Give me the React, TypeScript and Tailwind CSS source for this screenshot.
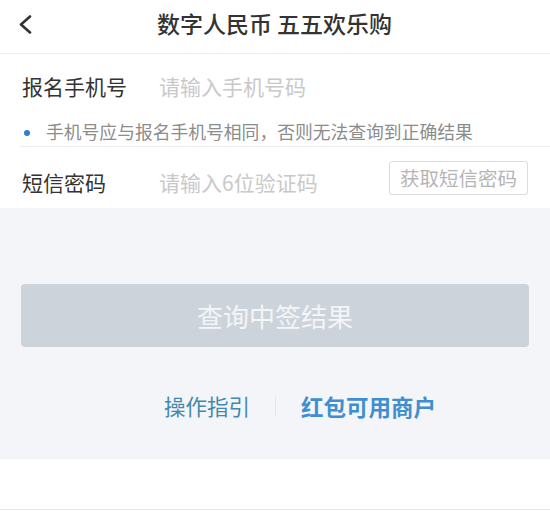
const App = () => {
  return (
    <div className="w-[550px] h-[514px] bg-white font-['Noto_Sans_CJK_SC',sans-serif] text-[#333]">
      {/* header */}
      <div className="relative h-[54px] flex items-center justify-center border-b border-[#efefef]">
        <button className="absolute left-[18px] top-[15px]">
          <svg width="15" height="19" viewBox="0 0 15 19" fill="none">
            <polyline
              points="12,1.5 3,9.5 12,17.5"
              stroke="#333"
              strokeWidth="2.6"
              strokeLinecap="round"
              strokeLinejoin="round"
            />
          </svg>
        </button>
        <h1 className="text-[23px] leading-[28px] font-medium -mt-[8px] ml-[-1px]">数字人民币 五五欢乐购</h1>
      </div>

      {/* phone */}
      <div className="h-[64px] flex items-center px-[22px]">
        <span className="w-[137px] text-[21px] leading-[28px]">报名手机号</span>
        <input
          className="flex-1 text-[21px] leading-[28px] outline-none placeholder:text-[#c9c9c9]"
          placeholder="请输入手机号码"
        />
      </div>

      {/* hint */}
      <div className="h-[29px] ml-[20px] flex items-center border-b border-[#eeeeee] pb-[2px]">
        <span className="w-[6px] h-[6px] rounded-full bg-[#2d7fd6] ml-[4px] mt-[3px]" />
        <span className="ml-[16px] text-[17.8px] leading-[24px] text-[#8c8c8c]">
          手机号应与报名手机号相同，否则无法查询到正确结果
        </span>
      </div>

      {/* sms code */}
      <div className="h-[61px] flex items-start px-[22px]">
        <span className="w-[137px] mt-[21px] text-[21px] leading-[28px]">短信密码</span>
        <input
          className="flex-1 min-w-0 mt-[21px] text-[21px] leading-[28px] outline-none placeholder:text-[#c9c9c9]"
          placeholder="请输入6位验证码"
        />
        <button className="mt-[14px] w-[139px] h-[34px] border border-[#dcdcdc] rounded-[3px] text-[19.5px] leading-[26px] text-[#b5b5b5]">
          获取短信密码
        </button>
      </div>

      {/* gray area */}
      <div className="h-[251px] bg-[#f4f5f9] px-[21px] pt-[76px]">
        <button className="w-full h-[63px] rounded-[4px] bg-[#cdd3da] text-[26px] leading-[32px] text-[#f3f5f7]">
          查询中签结果
        </button>
        <div className="mt-[45px] ml-[143px] flex items-center gap-[25px]">
          <span className="text-[21.5px] leading-[28px] text-[#3f8aad]">操作指引</span>
          <span className="w-px h-[20px] bg-[#e3e6ea]" />
          <span className="text-[22.5px] leading-[28px] font-bold text-[#3f8fd0]">红包可用商户</span>
        </div>
      </div>

      {/* bottom */}
      <div className="h-[51px] border-b border-[#e6e6e6]" />
    </div>
  );
};

export default App;
